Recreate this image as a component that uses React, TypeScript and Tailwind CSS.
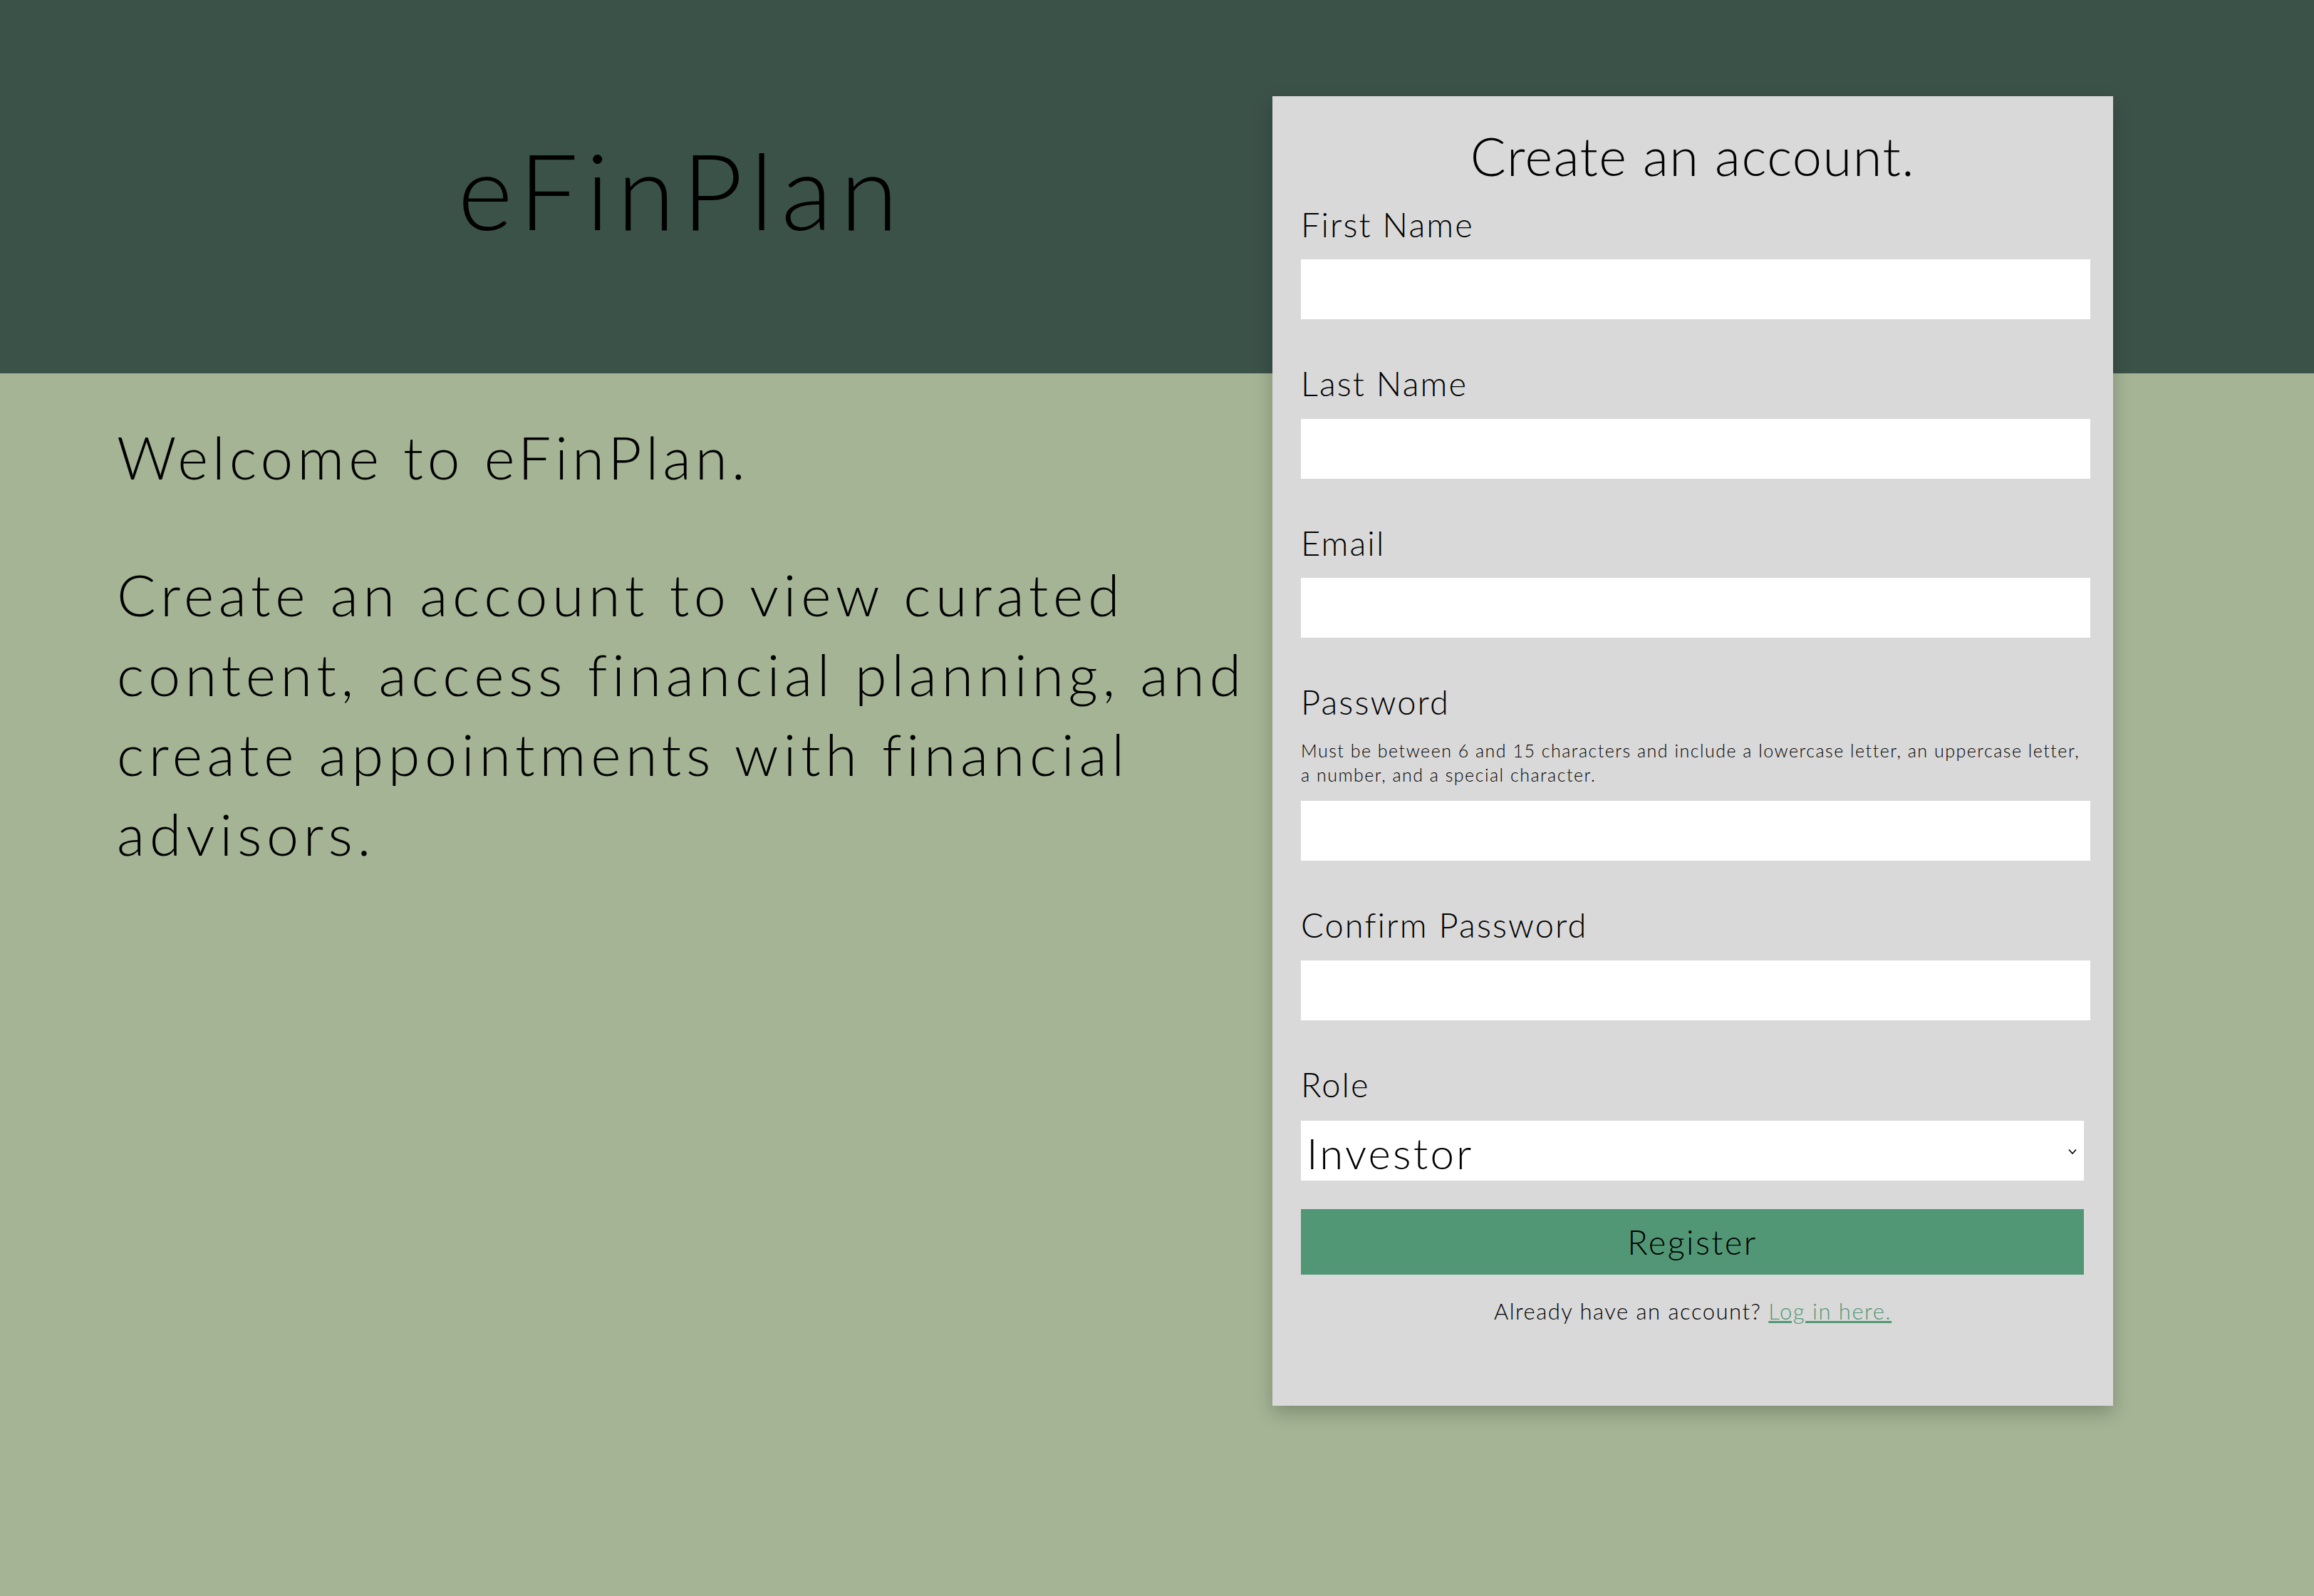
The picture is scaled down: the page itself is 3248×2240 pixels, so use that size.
import React from "react";

const font = { fontFamily: "Lato, 'Open Sans', sans-serif" };

function Field({ label, first, children }: { label: string; first?: boolean; children?: React.ReactNode }) {
  return (
    <div className="flex flex-col">
      <label className={`${first ? "mt-[23px]" : "mt-[62px]"} block text-[47px] leading-[1.2] font-light tracking-[2.1px] text-black`}>{label}</label>
      {children}
      <input type="text" className={`${children ? "mt-[20px]" : "mt-[21px]"} block h-[84px] w-[1108px] bg-white border-0 outline-none`} />
    </div>
  );
}

export default function App() {
  return (
    <div
      className="w-full min-h-[2240px] bg-[linear-gradient(to_bottom,#3b5249_0px,#3b5249_524px,#a4b494_524px,#a4b494_100%)] text-black"
      style={font}
    >
      <div className="flex flex-row pl-[164px]">
        <div className="w-[1586px] flex flex-col">
          <div className="h-[524px] pt-[8px] flex items-center justify-center">
            <h1 className="text-[148px] leading-none font-light tracking-[11px]">eFinPlan</h1>
          </div>
          <p className="mt-[68px] text-[82px] leading-[1.2] font-light tracking-[5.9px]">Welcome to eFinPlan.</p>
          <p className="mt-[88px] text-[81px] leading-[112px] font-light tracking-[6.6px] whitespace-nowrap">
            Create an account to view curated
            <br />
            content, access financial planning, and
            <br />
            create appointments with financial
            <br />
            advisors.
          </p>
        </div>
        <div className="ml-[36px] mt-[135px] w-[1180px] h-[1838px] bg-[#d9d9d9] px-[40px] pt-[40px] shadow-[0_10px_24px_rgba(0,0,0,0.22)] flex flex-col">
          <h2 className="text-center text-[74px] leading-[1.2] font-light tracking-[1.5px]">Create an account.</h2>
          <Field label="First Name" first />
          <Field label="Last Name" />
          <Field label="Email" />
          <Field label="Password">
            <p className="mt-[23px] text-[25px] leading-[34px] font-light tracking-[1.5px] whitespace-nowrap text-black">
              Must be between 6 and 15 characters and include a lowercase letter, an uppercase letter,
              <br />
              a number, and a special character.
            </p>
          </Field>
          <Field label="Confirm Password" />
          <div className="flex flex-col">
            <label className="mt-[62px] block text-[47px] leading-[1.2] font-light tracking-[2.1px]">Role</label>
            <div className="relative mt-[23px] w-[1099px] h-[84px] bg-white">
              <select
                defaultValue="Investor"
                className="appearance-none w-full h-full bg-white border-0 outline-none pl-[8px] text-[60px] font-light tracking-[3.2px] text-black"
                style={font}
              >
                <option>Investor</option>
                <option>Advisor</option>
              </select>
              <svg
                className="absolute right-[10px] top-[39px] pointer-events-none"
                width="12"
                height="9"
                viewBox="0 0 12 9"
                fill="none"
                stroke="#000"
                strokeWidth="1.6"
              >
                <path d="M1 1.5 L6 7 L11 1.5" />
              </svg>
            </div>
          </div>
          <button className="mt-[40px] w-[1099px] h-[92px] bg-[#529775] text-[47px] font-light tracking-[2.4px] text-black border-0" style={font}>
            Register
          </button>
          <p className="mt-[33px] text-center text-[31px] leading-[1.2] font-light tracking-[1.5px]">
            Already have an account?{" "}
            <a href="#" className="text-[#529775] underline">
              Log in here.
            </a>
          </p>
        </div>
      </div>
    </div>
  );
}
